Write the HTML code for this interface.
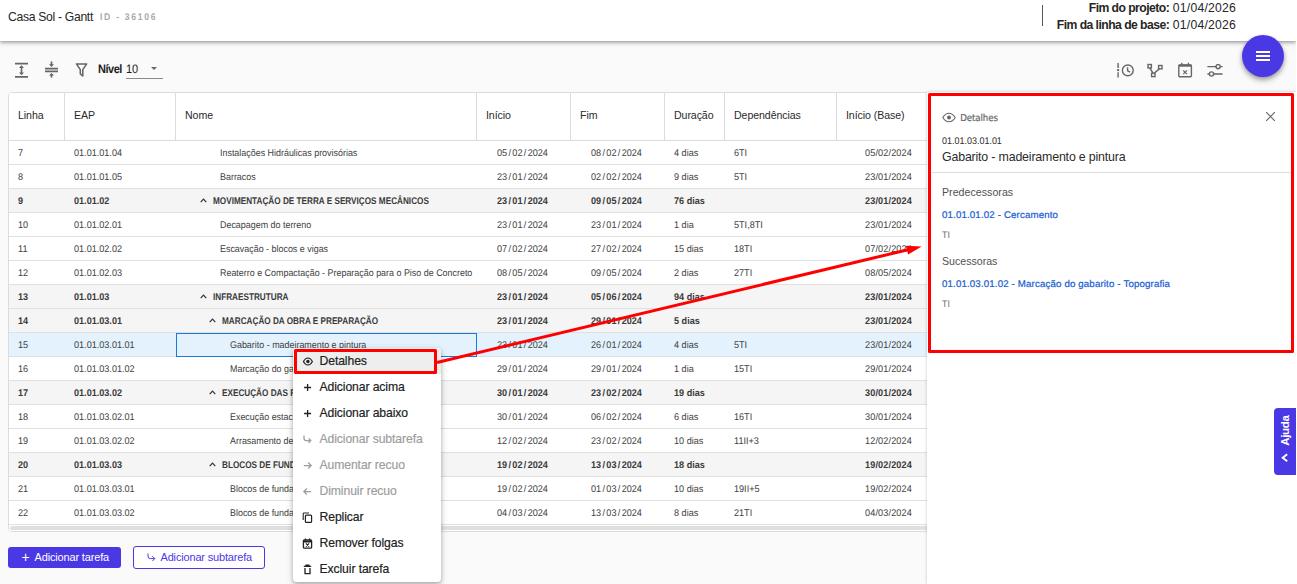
<!DOCTYPE html>
<html lang="pt-BR">
<head>
<meta charset="utf-8">
<title>Casa Sol - Gantt</title>
<style>
*{box-sizing:border-box;margin:0;padding:0}
html,body{width:1297px;height:584px;overflow:hidden}
body{background:#fafafa;font-family:"Liberation Sans",sans-serif;color:#212121;position:relative}
.abs{position:absolute}
/* header */
#hdr{position:absolute;left:0;top:0;width:1296px;height:41px;background:#fff;box-shadow:0 2px 4px rgba(0,0,0,.3),0 1px 2px rgba(0,0,0,.1)}
#title{position:absolute;left:8px;top:9px;font-size:12.2px;line-height:16px;color:#262626;letter-spacing:-.32px;white-space:nowrap}
#pid{position:absolute;left:100px;top:11px;font-size:9.7px;line-height:14px;color:#a9a9a9;letter-spacing:1.94px;font-weight:bold;white-space:nowrap;text-rendering:geometricPrecision;transform:scaleX(.887);transform-origin:0 50%}
#vline{position:absolute;left:1042px;top:5px;width:1px;height:21px;background:#555}
.fim{position:absolute;right:60px;font-size:12.2px;line-height:14px;color:#262626;white-space:nowrap;letter-spacing:.22px}
.fim b{font-weight:bold;letter-spacing:-.55px}
/* fab */
#fab{position:absolute;left:1242px;top:35px;width:42px;height:42px;border-radius:50%;background:#4b38e5;box-shadow:0 2px 4px rgba(0,0,0,.3),0 4px 6px rgba(0,0,0,.15)}
#fab i{position:absolute;left:13.6px;width:14.6px;height:2px;background:#fff}
/* toolbar */
.ico{position:absolute}
#nivel{position:absolute;left:98px;top:62px;font-size:12.2px;line-height:14px;font-weight:bold;color:#222;letter-spacing:-.52px;text-rendering:geometricPrecision;transform:scaleX(.9);transform-origin:0 50%;white-space:nowrap}
#nv10{position:absolute;left:126px;top:62px;font-size:12.2px;line-height:14px;color:#222;text-rendering:geometricPrecision;transform:scaleX(.9);transform-origin:0 50%}
#nvul{position:absolute;left:126px;top:78px;width:37px;height:1px;background:#8a8a8a}
#nvar{position:absolute;left:151px;top:67px;width:0;height:0;border-left:3.2px solid transparent;border-right:3.2px solid transparent;border-top:3.4px solid #666}
/* table */
#tbl{position:absolute;left:8px;top:92px;width:930px;height:440px;border:1px solid #dcdcdc;border-radius:4px;background:#fff}
#thead{position:absolute;left:9px;top:93px;width:919px;height:47px;background:#fff;border-radius:3px 3px 0 0}
.th{position:absolute;top:0;height:47px;line-height:45px;font-size:10.6px;color:#2a2a2a;white-space:nowrap;letter-spacing:-.08px;padding-left:9px;border-right:1px solid #dcdcdc}
.th.l{border-right:none}
#thb{position:absolute;left:9px;top:140px;width:919px;height:1px;background:#dcdcdc}
.row{position:absolute;left:9px;width:919px;height:24px;border-bottom:1px solid #e0e0e0;background:#fff;font-size:9.7px;color:#3e3e3e;text-rendering:geometricPrecision}
.row.grp{background:#f5f5f5;font-weight:bold;color:#3a3a3a}
.row.sel{background:#e3f2fd}
.c{position:absolute;top:1px;line-height:24px;white-space:nowrap;letter-spacing:0;transform:scaleX(.938);transform-origin:0 50%}
.c.nm{transform:scaleX(.9206)}
.grp .c.nm{letter-spacing:0;transform:scaleX(.845)}
.c.dt{letter-spacing:0}
.c.bs{letter-spacing:.16px}
.sl{font-weight:inherit;padding:0 1.45px}
.car{position:absolute;top:8.6px}
.selbox{position:absolute;left:167px;top:0;width:301px;height:24px;border:1px solid #1e78d6}
#scr{position:absolute;left:10px;top:526px;width:925px;height:4px;background:#e0e0e0;border-radius:2px}
#scrb{position:absolute;left:9px;top:525px;width:919px;height:6px;background:#fff;border-radius:0 0 0 3px}
/* buttons */
#b1{position:absolute;left:8px;top:547px;width:113px;height:21px;background:#4b38e5;border-radius:3px;color:#fff;font-size:11px;line-height:21px;white-space:nowrap;letter-spacing:-.16px}
#b2{position:absolute;left:133px;top:546px;width:132px;height:23px;background:#fff;border:1px solid #4b38e5;border-radius:3px;color:#4b38e5;font-size:11px;line-height:21px;white-space:nowrap;letter-spacing:-.17px}
/* right panel */
#rp{position:absolute;left:927px;top:92px;width:370px;height:492px;background:#fff;box-shadow:0 0 3px rgba(0,0,0,.22)}
#rpbox{position:absolute;left:928px;top:93px;width:366px;height:260px;border:3px solid #fe0000;border-radius:1.5px}
.rpt{position:absolute;left:942px;white-space:nowrap}
/* menu */
#menu{position:absolute;left:293px;top:348px;width:148px;height:234px;background:#fff;border-radius:4px;box-shadow:0 2px 4px rgba(0,0,0,.24),0 3px 8px rgba(0,0,0,.14)}
.mi{position:absolute;left:0;width:148px;height:26px;line-height:26px;font-size:12.2px;color:#212121;white-space:nowrap;letter-spacing:-.1px}
.mi span{position:absolute;left:26.5px;top:0;-webkit-text-stroke:.18px currentColor}
.mi.dis{color:#9d9d9d}
.mi svg{position:absolute;left:9px;top:7.5px}
#mired{position:absolute;left:294px;top:349px;width:143px;height:25px;border:3px solid #fe0000;border-radius:1.5px}
#ajuda{position:absolute;left:1274px;top:408px;width:22px;height:67px;background:#4b38e5;border-radius:4px 0 0 4px}
#edge{position:absolute;left:1296px;top:0;width:1px;height:584px;background:#fff}
</style>
</head>
<body>
<div id="hdr">
  <div id="title">Casa Sol - Gantt</div>
  <div id="pid">ID - 36106</div>
  <div id="vline"></div>
  <div class="fim" style="top:1px"><b>Fim do projeto:</b> 01/04/2026</div>
  <div class="fim" style="top:18.2px"><b>Fim da linha de base:</b> 01/04/2026</div>
</div>

<!-- toolbar left -->
<svg class="ico" style="left:14px;top:62px" width="15" height="16" viewBox="0 0 15 16"><g fill="none" stroke="#666" stroke-width="1.6"><path d="M1 1.6H14M1 14.9H14"/><path d="M7.5 4.4V12"/></g><path d="M7.5 3.2L10 6H5ZM7.5 13.3L10 10.5H5Z" fill="#666"/></svg>
<svg class="ico" style="left:44px;top:61px" width="15" height="17" viewBox="0 0 15 17"><g fill="none" stroke="#666" stroke-width="1.7"><path d="M1 7.6H14M1 10.3H14"/><path d="M7.5 0.6V4M7.5 13.5V16.6"/></g><path d="M7.5 6L10 3.3H5ZM7.5 12L10 14.6H5Z" fill="#666"/></svg>
<svg class="ico" style="left:75px;top:63px" width="13" height="14" viewBox="0 0 13 14"><path d="M1.4 0.9H11.7L7.8 6.6V13L5.3 10.8V6.6Z" fill="none" stroke="#666" stroke-width="1.55" stroke-linejoin="round"/></svg>
<div id="nivel">Nível</div><div id="nv10">10</div><div id="nvul"></div><div id="nvar"></div>

<!-- toolbar right -->
<svg class="ico" style="left:1116px;top:62px" width="19" height="17" viewBox="0 0 19 17"><g fill="none" stroke="#666" stroke-width="1.4"><path d="M2.1 1V5.9M2.1 10.3V15.4" /><circle cx="11.8" cy="8.4" r="5.4"/><path d="M11.6 5.2V8.8L14.2 10.2"/></g><circle cx="2.1" cy="8.1" r="1.2" fill="#666"/></svg>
<svg class="ico" style="left:1147px;top:63px" width="17" height="15" viewBox="0 0 17 15"><g fill="none" stroke="#666" stroke-width="1.4"><rect x="1" y="1.5" width="3.4" height="3.4"/><rect x="11.6" y="2.5" width="3.4" height="3.4"/><rect x="4.6" y="10.2" width="3.4" height="3.4"/><path d="M2.8 5.1L6 10M7.4 10L12.4 5.9"/></g></svg>
<svg class="ico" style="left:1177px;top:62px" width="16" height="16" viewBox="0 0 16 16"><g fill="none" stroke="#666" stroke-width="1.4"><rect x="1.8" y="3" width="12.6" height="11.8" rx="1"/><path d="M1.8 3.6H14.4" stroke-width="2.2"/><path d="M4.8 0.8V3.4M11.4 0.8V3.4"/><path d="M6.2 8.4L10 12.2M10 8.4L6.2 12.2" stroke-width="1.2"/></g></svg>
<svg class="ico" style="left:1207px;top:64px" width="16" height="13" viewBox="0 0 16 13"><g fill="none" stroke="#666" stroke-width="1.4"><path d="M0.4 2.6H9M13.2 2.6H15.6M0.4 10H2.4M6.6 10H15.6"/><circle cx="11.1" cy="2.6" r="2.1"/><circle cx="4.5" cy="10" r="2.1"/></g></svg>

<div id="fab"><i style="top:16.3px"></i><i style="top:20.2px"></i><i style="top:24.1px"></i></div>

<!-- table -->
<div id="tbl"></div>
<div id="thead">
  <div class="th" style="left:0;width:56px">Linha</div>
  <div class="th" style="left:56px;width:111px">EAP</div>
  <div class="th" style="left:167px;width:301px">Nome</div>
  <div class="th" style="left:468px;width:94px">Início</div>
  <div class="th" style="left:562px;width:94px">Fim</div>
  <div class="th" style="left:656px;width:60px">Duração</div>
  <div class="th" style="left:716px;width:112px">Dependências</div>
  <div class="th l" style="left:828px;width:91px">Início (Base)</div>
</div>
<div id="thb"></div>
<div class="row" style="top:141px"><span class="c" style="left:9px">7</span><span class="c" style="left:65px">01.01.01.04</span><span class="c nm" style="left:211px">Instalações Hidráulicas provisórias</span><span class="c dt" style="left:488px">05<b class="sl">/</b>02<b class="sl">/</b>2024</span><span class="c dt" style="left:582px">08<b class="sl">/</b>02<b class="sl">/</b>2024</span><span class="c" style="left:665px">4 dias</span><span class="c" style="left:724.5px">6TI</span><span class="c bs" style="left:856px">05/02/2024</span></div>
<div class="row" style="top:165px"><span class="c" style="left:9px">8</span><span class="c" style="left:65px">01.01.01.05</span><span class="c nm" style="left:211px">Barracos</span><span class="c dt" style="left:488px">23<b class="sl">/</b>01<b class="sl">/</b>2024</span><span class="c dt" style="left:582px">02<b class="sl">/</b>02<b class="sl">/</b>2024</span><span class="c" style="left:665px">9 dias</span><span class="c" style="left:724.5px">5TI</span><span class="c bs" style="left:856px">23/01/2024</span></div>
<div class="row grp" style="top:189px"><span class="c" style="left:9px">9</span><span class="c" style="left:65px">01.01.02</span><svg class="car" style="left:191px" width="7" height="5" viewBox="0 0 7 5"><path d="M0.7 4.2 L3.5 1.2 L6.3 4.2" fill="none" stroke="#333" stroke-width="1.2"/></svg><span class="c nm" style="left:204px">MOVIMENTAÇÃO DE TERRA E SERVIÇOS MECÂNICOS</span><span class="c dt" style="left:488px">23<b class="sl">/</b>01<b class="sl">/</b>2024</span><span class="c dt" style="left:582px">09<b class="sl">/</b>05<b class="sl">/</b>2024</span><span class="c" style="left:665px">76 dias</span><span class="c" style="left:724.5px"></span><span class="c bs" style="left:856px">23/01/2024</span></div>
<div class="row" style="top:213px"><span class="c" style="left:9px">10</span><span class="c" style="left:65px">01.01.02.01</span><span class="c nm" style="left:211px">Decapagem do terreno</span><span class="c dt" style="left:488px">23<b class="sl">/</b>01<b class="sl">/</b>2024</span><span class="c dt" style="left:582px">23<b class="sl">/</b>01<b class="sl">/</b>2024</span><span class="c" style="left:665px">1 dia</span><span class="c" style="left:724.5px">5TI,8TI</span><span class="c bs" style="left:856px">23/01/2024</span></div>
<div class="row" style="top:237px"><span class="c" style="left:9px">11</span><span class="c" style="left:65px">01.01.02.02</span><span class="c nm" style="left:211px">Escavação - blocos e vigas</span><span class="c dt" style="left:488px">07<b class="sl">/</b>02<b class="sl">/</b>2024</span><span class="c dt" style="left:582px">27<b class="sl">/</b>02<b class="sl">/</b>2024</span><span class="c" style="left:665px">15 dias</span><span class="c" style="left:724.5px">18TI</span><span class="c bs" style="left:856px">07/02/2024</span></div>
<div class="row" style="top:261px"><span class="c" style="left:9px">12</span><span class="c" style="left:65px">01.01.02.03</span><span class="c nm" style="left:211px">Reaterro e Compactação - Preparação para o Piso de Concreto</span><span class="c dt" style="left:488px">08<b class="sl">/</b>05<b class="sl">/</b>2024</span><span class="c dt" style="left:582px">09<b class="sl">/</b>05<b class="sl">/</b>2024</span><span class="c" style="left:665px">2 dias</span><span class="c" style="left:724.5px">27TI</span><span class="c bs" style="left:856px">08/05/2024</span></div>
<div class="row grp" style="top:285px"><span class="c" style="left:9px">13</span><span class="c" style="left:65px">01.01.03</span><svg class="car" style="left:191px" width="7" height="5" viewBox="0 0 7 5"><path d="M0.7 4.2 L3.5 1.2 L6.3 4.2" fill="none" stroke="#333" stroke-width="1.2"/></svg><span class="c nm" style="left:204px">INFRAESTRUTURA</span><span class="c dt" style="left:488px">23<b class="sl">/</b>01<b class="sl">/</b>2024</span><span class="c dt" style="left:582px">05<b class="sl">/</b>06<b class="sl">/</b>2024</span><span class="c" style="left:665px">94 dias</span><span class="c" style="left:724.5px"></span><span class="c bs" style="left:856px">23/01/2024</span></div>
<div class="row grp" style="top:309px"><span class="c" style="left:9px">14</span><span class="c" style="left:65px">01.01.03.01</span><svg class="car" style="left:199.5px" width="7" height="5" viewBox="0 0 7 5"><path d="M0.7 4.2 L3.5 1.2 L6.3 4.2" fill="none" stroke="#333" stroke-width="1.2"/></svg><span class="c nm" style="left:212.5px">MARCAÇÃO DA OBRA E PREPARAÇÃO</span><span class="c dt" style="left:488px">23<b class="sl">/</b>01<b class="sl">/</b>2024</span><span class="c dt" style="left:582px">29<b class="sl">/</b>01<b class="sl">/</b>2024</span><span class="c" style="left:665px">5 dias</span><span class="c" style="left:724.5px"></span><span class="c bs" style="left:856px">23/01/2024</span></div>
<div class="row sel" style="top:333px"><i class="selbox"></i><span class="c" style="left:9px">15</span><span class="c" style="left:65px">01.01.03.01.01</span><span class="c nm" style="left:220.5px">Gabarito - madeiramento e pintura</span><span class="c dt" style="left:488px">23<b class="sl">/</b>01<b class="sl">/</b>2024</span><span class="c dt" style="left:582px">26<b class="sl">/</b>01<b class="sl">/</b>2024</span><span class="c" style="left:665px">4 dias</span><span class="c" style="left:724.5px">5TI</span><span class="c bs" style="left:856px">23/01/2024</span></div>
<div class="row" style="top:357px"><span class="c" style="left:9px">16</span><span class="c" style="left:65px">01.01.03.01.02</span><span class="c nm" style="left:220.5px">Marcação do gabarito - Topografia</span><span class="c dt" style="left:488px">29<b class="sl">/</b>01<b class="sl">/</b>2024</span><span class="c dt" style="left:582px">29<b class="sl">/</b>01<b class="sl">/</b>2024</span><span class="c" style="left:665px">1 dia</span><span class="c" style="left:724.5px">15TI</span><span class="c bs" style="left:856px">29/01/2024</span></div>
<div class="row grp" style="top:381px"><span class="c" style="left:9px">17</span><span class="c" style="left:65px">01.01.03.02</span><svg class="car" style="left:199.5px" width="7" height="5" viewBox="0 0 7 5"><path d="M0.7 4.2 L3.5 1.2 L6.3 4.2" fill="none" stroke="#333" stroke-width="1.2"/></svg><span class="c nm" style="left:212.5px">EXECUÇÃO DAS FUNDAÇÕES PROFUNDAS</span><span class="c dt" style="left:488px">30<b class="sl">/</b>01<b class="sl">/</b>2024</span><span class="c dt" style="left:582px">23<b class="sl">/</b>02<b class="sl">/</b>2024</span><span class="c" style="left:665px">19 dias</span><span class="c" style="left:724.5px"></span><span class="c bs" style="left:856px">30/01/2024</span></div>
<div class="row" style="top:405px"><span class="c" style="left:9px">18</span><span class="c" style="left:65px">01.01.03.02.01</span><span class="c nm" style="left:220.5px">Execução estacas</span><span class="c dt" style="left:488px">30<b class="sl">/</b>01<b class="sl">/</b>2024</span><span class="c dt" style="left:582px">06<b class="sl">/</b>02<b class="sl">/</b>2024</span><span class="c" style="left:665px">6 dias</span><span class="c" style="left:724.5px">16TI</span><span class="c bs" style="left:856px">30/01/2024</span></div>
<div class="row" style="top:429px"><span class="c" style="left:9px">19</span><span class="c" style="left:65px">01.01.03.02.02</span><span class="c nm" style="left:220.5px">Arrasamento de estacas</span><span class="c dt" style="left:488px">12<b class="sl">/</b>02<b class="sl">/</b>2024</span><span class="c dt" style="left:582px">23<b class="sl">/</b>02<b class="sl">/</b>2024</span><span class="c" style="left:665px">10 dias</span><span class="c" style="left:724.5px">11II+3</span><span class="c bs" style="left:856px">12/02/2024</span></div>
<div class="row grp" style="top:453px"><span class="c" style="left:9px">20</span><span class="c" style="left:65px">01.01.03.03</span><svg class="car" style="left:199.5px" width="7" height="5" viewBox="0 0 7 5"><path d="M0.7 4.2 L3.5 1.2 L6.3 4.2" fill="none" stroke="#333" stroke-width="1.2"/></svg><span class="c nm" style="left:212.5px">BLOCOS DE FUNDAÇÃO</span><span class="c dt" style="left:488px">19<b class="sl">/</b>02<b class="sl">/</b>2024</span><span class="c dt" style="left:582px">13<b class="sl">/</b>03<b class="sl">/</b>2024</span><span class="c" style="left:665px">18 dias</span><span class="c" style="left:724.5px"></span><span class="c bs" style="left:856px">19/02/2024</span></div>
<div class="row" style="top:477px"><span class="c" style="left:9px">21</span><span class="c" style="left:65px">01.01.03.03.01</span><span class="c nm" style="left:220.5px">Blocos de fundação - armação</span><span class="c dt" style="left:488px">19<b class="sl">/</b>02<b class="sl">/</b>2024</span><span class="c dt" style="left:582px">01<b class="sl">/</b>03<b class="sl">/</b>2024</span><span class="c" style="left:665px">10 dias</span><span class="c" style="left:724.5px">19II+5</span><span class="c bs" style="left:856px">19/02/2024</span></div>
<div class="row" style="top:501px"><span class="c" style="left:9px">22</span><span class="c" style="left:65px">01.01.03.03.02</span><span class="c nm" style="left:220.5px">Blocos de fundação - concretagem</span><span class="c dt" style="left:488px">04<b class="sl">/</b>03<b class="sl">/</b>2024</span><span class="c dt" style="left:582px">13<b class="sl">/</b>03<b class="sl">/</b>2024</span><span class="c" style="left:665px">8 dias</span><span class="c" style="left:724.5px">21TI</span><span class="c bs" style="left:856px">04/03/2024</span></div>
<div id="scrb"></div><div id="scr"></div>

<!-- bottom buttons -->
<div id="b1"><span class="abs" style="left:13.4px;top:-.5px;font-size:14px">+</span><span class="abs" style="left:26.5px">Adicionar tarefa</span></div>
<div id="b2"><svg class="abs" style="left:12.5px;top:6px" width="9" height="9" viewBox="0 0 9 9"><path d="M1 0.5V3.2Q1 5.6 3.4 5.6H7.6M5.4 3.2L7.8 5.6L5.4 8" fill="none" stroke="#4b38e5" stroke-width="1"/></svg><span class="abs" style="left:26.5px">Adicionar subtarefa</span></div>

<!-- right panel -->
<div id="rp"></div>
<svg class="ico" style="left:942.1px;top:112.3px" width="14" height="11" viewBox="0 0 14 11"><path d="M0.8 5.5Q3.4 1.2 7 1.2T13.2 5.5Q10.6 9.8 7 9.8T0.8 5.5Z" fill="none" stroke="#666" stroke-width="1.1"/><circle cx="7" cy="5.5" r="2" fill="#666"/></svg>
<div class="rpt" style="left:960.3px;top:111.5px;font-size:9.6px;line-height:13px;text-rendering:geometricPrecision;color:#686868;font-family:'DejaVu Sans Condensed','DejaVu Sans','Liberation Sans',sans-serif;letter-spacing:-.1px;-webkit-text-stroke:.2px #686868">Detalhes</div>
<svg class="ico" style="left:1265px;top:111px" width="11" height="11" viewBox="0 0 11 11"><path d="M1.2 1.2L9.8 9.8M9.8 1.2L1.2 9.8" stroke="#666" stroke-width="1.2" fill="none"/></svg>
<div class="rpt" style="top:134.5px;font-size:9.7px;line-height:13px;color:#2e2e2e;text-rendering:geometricPrecision;transform:scaleX(.926);transform-origin:0 50%">01.01.03.01.01</div>
<div class="rpt" style="top:149px;font-size:12.4px;line-height:16px;color:#2b2b2b;letter-spacing:-.18px">Gabarito - madeiramento e pintura</div>
<div class="abs" style="left:932px;top:172px;width:360px;height:1px;background:#dcdcdc"></div>
<div class="rpt" style="top:185px;font-size:10.6px;line-height:14px;color:#505050;letter-spacing:.04px">Predecessoras</div>
<div class="rpt" style="top:208px;font-size:9.7px;line-height:14px;color:#1a60d3;letter-spacing:.15px;text-rendering:geometricPrecision;-webkit-text-stroke:.22px #1a60d3;margin-top:1px">01.01.01.02 - Cercamento</div>
<div class="rpt" style="top:229px;font-size:9.6px;line-height:13px;color:#6c6c6c;text-rendering:geometricPrecision;transform:scaleX(.92);transform-origin:0 50%">TI</div>
<div class="rpt" style="top:254px;font-size:10.6px;line-height:14px;color:#505050;letter-spacing:0">Sucessoras</div>
<div class="rpt" style="top:277px;font-size:9.7px;line-height:14px;color:#1a60d3;letter-spacing:.15px;text-rendering:geometricPrecision;-webkit-text-stroke:.22px #1a60d3;margin-top:1px">01.01.03.01.02 - Marcação do gabarito - Topografia</div>
<div class="rpt" style="top:298px;font-size:9.6px;line-height:13px;color:#6c6c6c;text-rendering:geometricPrecision;transform:scaleX(.92);transform-origin:0 50%">TI</div>
<div id="rpbox"></div>

<!-- ajuda tab -->
<div id="ajuda">
  <svg class="abs" style="left:0;top:0" width="22" height="67" viewBox="0 0 22 67"><path d="M13.2 46.2L8.7 49.7L13.2 53.2" fill="none" stroke="#fff" stroke-width="1.9"/><text transform="translate(14.6 37.8) rotate(-90)" font-family="Liberation Sans, sans-serif" font-size="11.5" font-weight="bold" fill="#fff" letter-spacing="-.3">Ajuda</text></svg>
</div>
<div id="edge"></div>

<!-- context menu -->
<div id="menu">
  <div class="mi" style="top:0;background:#eee;border-radius:4px 4px 0 0"><svg width="11" height="11" viewBox="0 0 11 11"><path d="M1.4 5.5Q3.2 2 5.9 2T10.4 5.5Q8.6 9 5.9 9T1.4 5.5Z" fill="none" stroke="#222" stroke-width="1.1"/><circle cx="5.9" cy="5.5" r="1.7" fill="#222"/></svg><span>Detalhes</span></div>
  <div class="mi" style="top:26px"><svg width="11" height="11" viewBox="0 0 11 11"><path d="M5.6 2V9M2.1 5.5H9.1" stroke="#222" stroke-width="1.3" fill="none"/></svg><span>Adicionar acima</span></div>
  <div class="mi" style="top:52px"><svg width="11" height="11" viewBox="0 0 11 11"><path d="M5.6 2V9M2.1 5.5H9.1" stroke="#222" stroke-width="1.3" fill="none"/></svg><span>Adicionar abaixo</span></div>
  <div class="mi dis" style="top:78px"><svg width="11" height="11" viewBox="0 0 11 11"><path d="M2 1.6V4.2Q2 6.6 4.4 6.6H8.6M6.6 4.4L8.8 6.6L6.6 8.8" fill="none" stroke="#9d9d9d" stroke-width="1.25"/></svg><span>Adicionar subtarefa</span></div>
  <div class="mi dis" style="top:104px"><svg width="11" height="11" viewBox="0 0 11 11"><path d="M1.8 5.5H9.2M6.2 2.5L9.2 5.5L6.2 8.5" fill="none" stroke="#9d9d9d" stroke-width="1.25"/></svg><span>Aumentar recuo</span></div>
  <div class="mi dis" style="top:130px"><svg width="11" height="11" viewBox="0 0 11 11"><path d="M9.2 5.5H1.8M4.8 2.5L1.8 5.5L4.8 8.5" fill="none" stroke="#9d9d9d" stroke-width="1.25"/></svg><span>Diminuir recuo</span></div>
  <div class="mi" style="top:156px"><svg width="11" height="11" viewBox="0 0 11 11"><path d="M1.2 8V1.8Q1.2 1 2 1H7" fill="none" stroke="#222" stroke-width="1.1"/><rect x="3.4" y="3.2" width="6.2" height="7.2" rx="1" fill="none" stroke="#222" stroke-width="1.2"/></svg><span>Replicar</span></div>
  <div class="mi" style="top:182px"><svg width="11" height="11" viewBox="0 0 11 11"><rect x="1.4" y="2" width="8.2" height="8.2" rx="1" fill="none" stroke="#222" stroke-width="1.3"/><path d="M1.4 3.6H9.6" stroke="#222" stroke-width="1.8"/><path d="M3.4 0.6V2.4M7.6 0.6V2.4" stroke="#222" stroke-width="1.2"/><path d="M3.9 5.4L7.1 8.6M7.1 5.4L3.9 8.6" stroke="#222" stroke-width="1.1"/></svg><span>Remover folgas</span></div>
  <div class="mi" style="top:208px"><svg width="11" height="11" viewBox="0 0 11 11"><path d="M1.8 2.4H9.2M4 2.2V1.2H7V2.2" fill="none" stroke="#222" stroke-width="1.2"/><path d="M3 4V9.6H8V4" fill="none" stroke="#222" stroke-width="1.3"/></svg><span>Excluir tarefa</span></div>
</div>
<div id="mired"></div>

<!-- red arrow annotation -->
<svg class="abs" style="left:430px;top:230px" width="500" height="140" viewBox="430 230 500 140"><path d="M437 362.5L908 249.7" stroke="#fe0000" stroke-width="3" fill="none"/><path d="M921.6 246.4L905.8 245.8L908.2 254.6Z" fill="#fe0000"/></svg>
</body>
</html>
